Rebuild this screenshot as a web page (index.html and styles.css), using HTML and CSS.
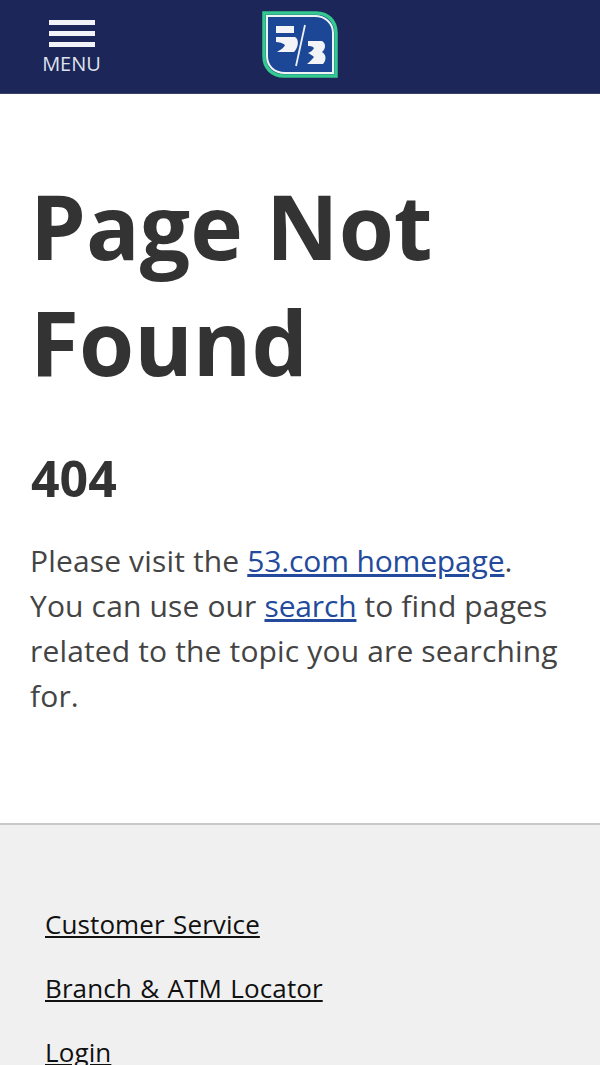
FILE: index.html
```html
<!DOCTYPE html>
<html lang="en">
<head>
<meta charset="utf-8">
<title>Page Not Found</title>
<link rel="stylesheet" href="styles.css">
</head>
<body>
<header class="topbar">
  <a class="menu" href="#">
    <span class="bars"><i></i><i></i><i></i></span>
    <span class="menu-label">MENU</span>
  </a>
  <a class="logo" href="#" aria-label="Fifth Third Bank">
    <svg width="76" height="68" viewBox="0 0 76 68">
      <path d="M2 2H54C66 2 74 10 74 22V65H22C10 65 2 57 2 45Z" fill="#1c4797" stroke="#34c98e" stroke-width="3.500"/>
      <path d="M5 5H53C63 5 71 12 71 22V62H23C12 62 5 55 5 45Z" fill="none" stroke="#eef6f4" stroke-width="2"/>
      <path d="M14 15H32V22H14ZM14 26H33C37 28 37 36 32 41H15C18 39 22 37 23 34C21 32 17 31 14 31Z" fill="#f2f4f8"/>
      <path d="M43 14L34 55" stroke="#eef0f6" stroke-width="1.800" fill="none"/>
      <path d="M46 30H60C64 32 64 38 60 41C65 44 64 50 61 53H45C48 51 50 48 52 46C50 44 48 43 46 42C49 41 51 39 52 37C50 35 48 35 46 35Z" fill="#f2f4f8"/>
    </svg>
  </a>
</header>
<main class="content">
  <h1>Page Not Found</h1>
  <h2>404</h2>
  <p>Please visit the <a href="#">53.com homepage</a>. You can use our <a href="#">search</a> to find pages related to the topic you are searching for.</p>
</main>
<footer class="foot">
  <ul>
    <li><a href="#">Customer Service</a></li>
    <li><a href="#">Branch &amp; ATM Locator</a></li>
    <li><a href="#">Login</a></li>
  </ul>
</footer>
</body>
</html>
```
FILE: styles.css
```css
* { box-sizing: border-box; }
html, body { margin: 0; padding: 0; }
body {
  font-family: "Open Sans", sans-serif;
  color: #333;
  background: #fff;
  height: 1065px;
  overflow: hidden;
}
.topbar {
  height: 94px;
  background: #1c2658;
  display: flex;
  align-items: flex-start;
  padding-left: 42px;
  border-bottom: 1px solid #3a4268;
}
.menu {
  width: 59px;
  padding-top: 20px;
  display: flex;
  flex-direction: column;
  align-items: center;
  color: #dfe3ee;
  text-decoration: none;
}
.bars { display: flex; flex-direction: column; gap: 6px; width: 46px; }
.bars i { display: block; height: 5px; background: #f2f3f8; }
.menu-label { font-size: 20px; line-height: 24px; margin-top: 5px; }
.logo { display: block; margin: 11px 0 0 161px; line-height: 0; }
.content { height: 729px; padding: 74px 30px 0 30px; }
h1 {
  margin: 0;
  font-size: 89.200px;
  line-height: 116px;
  font-weight: 700;
  color: #333;
}
h2 {
  margin: 44px 0 0 1px;
  font-size: 50px;
  line-height: 68px;
  font-weight: 700;
  color: #333;
}
p {
  margin: 26px 0 0;
  font-size: 30px;
  line-height: 45px;
  letter-spacing: 0.150px;
  color: #444;
}
p a { color: #234a9c; letter-spacing: -0.150px; }
.foot {
  background: #f0f0f0;
  border-top: 2px solid #c8c8c8;
  height: 242px;
  padding: 79px 0 0 45px;
}
.foot ul { list-style: none; margin: 0; padding: 0; display: flex; flex-direction: column; gap: 23px; }
.foot li { font-size: 26px; line-height: 41px; letter-spacing: 0.100px; word-spacing: 1.500px; }
.foot a { color: #111; }
```
